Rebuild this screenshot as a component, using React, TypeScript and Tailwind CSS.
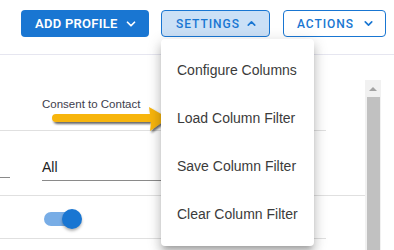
import { ChevronDown, ChevronUp } from "lucide-react";

const MENU_ITEMS = [
  "Configure Columns",
  "Load Column Filter",
  "Save Column Filter",
  "Clear Column Filter",
];

function Toggle() {
  return (
    <div className="relative h-[20px] w-[40px]">
      <div className="absolute left-0 top-[5px] h-[14px] w-[34px] rounded-full bg-[#78ade6]" />
      <div className="absolute left-[18px] top-[2px] h-[20px] w-[20px] rounded-full bg-[#1976d2] shadow-[0_2px_3px_rgba(0,0,0,0.3)]" />
    </div>
  );
}

function PointerArrow() {
  return (
    <svg
      width="124"
      height="34"
      viewBox="0 0 124 34"
      className="absolute left-[48px] top-[104px]"
    >
      <defs>
        <filter id="arrowShadow" x="-10%" y="-30%" width="130%" height="170%">
          <feDropShadow dx="1.5" dy="2" stdDeviation="1.2" floodColor="#000" floodOpacity="0.6" />
        </filter>
      </defs>
      <path
        d="M8 10 L102 10 L101 3 L120 14 L102 27 L103 18 L8 18 A4 4 0 0 1 8 10 Z"
        fill="#f7b50c"
        filter="url(#arrowShadow)"
      />
    </svg>
  );
}

export default function App() {
  return (
    <main className="relative h-[250px] w-[394px] overflow-hidden bg-white font-['Roboto',sans-serif]">
      {/* toolbar */}
      <div className="flex h-[55px] items-start gap-[12px] border-b border-[#e6e6f0] pl-[21px] pt-[10px]">
        <button className="flex h-[27px] w-[128px] items-center justify-between rounded-[4px] bg-[#1976d2] pl-[14px] pr-[11px] text-[13px] font-semibold tracking-[0.02em] text-white">
          ADD PROFILE
          <ChevronDown size={14} strokeWidth={3} />
        </button>
        <button className="flex h-[27px] w-[109px] items-center justify-between rounded-[4px] border border-[#1976d2] bg-[#cbe0f6] pl-[14px] pr-[11px] text-[12px] font-medium tracking-[0.08em] text-[#1976d2]">
          SETTINGS
          <ChevronUp size={13} strokeWidth={3} />
        </button>
        <button className="ml-[1px] flex h-[27px] w-[103px] items-center justify-between rounded-[4px] border border-[#1976d2] bg-white pl-[13px] pr-[10px] text-[12px] font-medium tracking-[0.08em] text-[#1976d2]">
          ACTIONS
          <ChevronDown size={13} strokeWidth={3} />
        </button>
      </div>

      {/* table */}
      <div className="mt-[25px] flex">
        <div className="flex w-[365px] flex-col font-['Liberation_Sans',Arial,sans-serif]">
          <div className="flex h-[51px] w-[326px] items-center border-b border-[#e0e0e0] pl-[42px] text-[11.5px] text-[#3d3d4d]">
            Consent to Contact
          </div>
          <div className="relative h-[65px] border-b border-[#e0e0e0]">
            <div className="absolute left-0 top-[46px] h-px w-[10px] bg-[#8a8a8a]" />
            <div className="absolute left-[42px] top-[26px] w-[270px] border-b border-[#8a8a8a] pb-[2px] text-[14px] text-[#222]">
              All
            </div>
          </div>
          <div className="flex h-[43px] w-[326px] items-center border-b border-[#e0e0e0] pl-[44px]">
            <Toggle />
          </div>
        </div>
        <div className="flex h-[170px] w-[16px] flex-col items-center bg-[#f1f1f1]">
          <div className="mt-[7px] h-0 w-0 border-x-[4px] border-b-[4px] border-x-transparent border-b-[#a3a3a3]" />
          <div className="mt-[6px] h-full w-[13px] bg-[#c1c1c1]" />
        </div>
      </div>

      <PointerArrow />

      {/* settings menu */}
      <div className="absolute left-[161px] top-[39px] flex h-[207px] w-[153px] flex-col rounded-[4px] bg-white pt-[7px] shadow-[0_5px_5px_-3px_rgba(0,0,0,0.2),0_8px_10px_1px_rgba(0,0,0,0.14),0_3px_14px_2px_rgba(0,0,0,0.12)]">
        {MENU_ITEMS.map((item) => (
          <div
            key={item}
            className="flex h-[48px] items-center pl-[16px] font-['Liberation_Sans',Arial,sans-serif] text-[14px] text-[#3b3b3b]"
          >
            {item}
          </div>
        ))}
      </div>
    </main>
  );
}
